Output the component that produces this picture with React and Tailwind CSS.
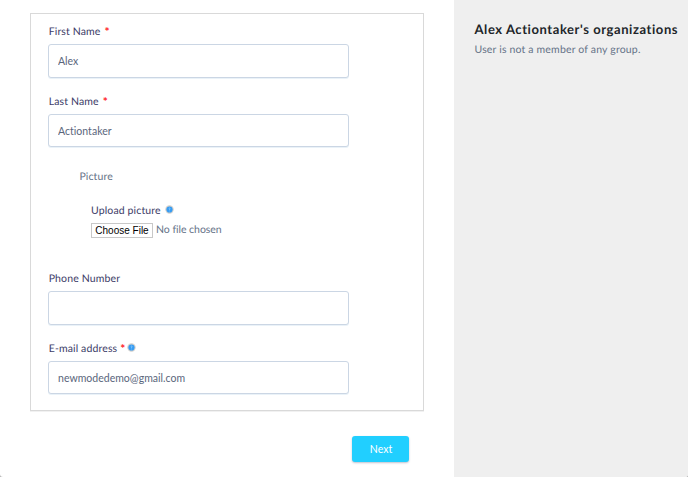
function HelpDot({ className = '' }) {
  return (
    <svg className={`h-[9px] w-[9px] shrink-0 ${className}`} viewBox="0 0 9 9">
      <circle cx="4.5" cy="4.5" r="4.2" fill="#d3d0cc" />
      <circle cx="4.5" cy="4.5" r="3.1" fill="#369cf3" />
      <path d="M3.8 3.4Q4.5 2.7 5.1 3.5Q5.1 4.1 4.5 4.6V5.1M4.5 5.7V6.3" fill="none" stroke="#a5daff" strokeWidth="0.7" />
    </svg>
  );
}

function Required({ className = '' }) {
  return <span className={`text-[12px] font-bold tracking-normal text-[#ff1f2d] ${className}`}>*</span>;
}

function Field({ label, required, help, value = '', tall, className = '' }) {
  return (
    <div className={className}>
      <label className="flex h-[14px] items-center whitespace-pre pl-[0.7px] pt-px leading-[14px] tracking-[0.13px] text-[#3d3d68]">
        <span>{label}</span>
        {required && <Required className={help ? 'ml-[3px]' : 'ml-[4px]'} />}
        {help && <HelpDot className="-mt-[2px] ml-[1.5px]" />}
      </label>
      <input
        type="text"
        defaultValue={value}
        className={`mt-[6px] block w-[301px] rounded-[3px] border border-[#cbd6e4] bg-white px-[9px] tracking-[0.02px] text-[#5a667c] shadow-[0_1px_0_#eaf2f8] outline-none ${tall ? 'h-[34px] pb-px' : 'h-[33px]'}`}
      />
    </div>
  );
}

export default function App() {
  return (
    <div className="bg-[#b5b5b5]">
      <div className="flex h-[477px] w-[688px] overflow-hidden rounded-b-[3px] bg-white font-['Lato','Liberation_Sans',sans-serif] text-[10.5px] text-[#667388] [text-rendering:geometricPrecision]">
        <main className="w-[454px] pl-[30px] pt-[13px]">
          <section className="h-[398px] w-[394px] border border-[#d9d9d9] pl-[17px] pt-[10px] shadow-[0_1px_0_#f1f1f1]">
            <Field label="First Name" required value="Alex" tall />
            <Field className="mt-[16px]" label="Last Name" required value="Actiontaker" />
            <fieldset className="mt-[22px] pl-[31px]">
              <div className="h-[14px] pt-px pl-[0.5px] leading-[14px] tracking-[0.1px]">Picture</div>
              <div className="mt-[20px] pl-[12px]">
                <div className="flex h-[14px] items-center pt-px leading-[14px] tracking-[0.13px] text-[#3d3d68]">
                  <span>Upload picture</span>
                  <HelpDot className="-mt-[2px] ml-[4.5px]" />
                </div>
                <div className="mt-[6px] flex h-[15px] items-center">
                  <button className="h-[15px] w-[62px] whitespace-nowrap border border-[#c8c8c8] bg-white font-['Liberation_Sans',sans-serif] text-[10px] leading-[13px] text-black">
                    Choose File
                  </button>
                  <span className="ml-[3px] pt-px tracking-[-0.04px]">No file chosen</span>
                </div>
              </div>
            </fieldset>
            <Field className="mt-[33px]" label="Phone Number" tall />
            <Field className="mt-[16px]" label="E-mail address" required help value="newmodedemo@gmail.com" />
          </section>
          <button className="ml-[322px] mt-[25px] block h-[26px] w-[57px] rounded-[3px] bg-[#21cfff] pl-px pt-px text-[10.5px] text-white shadow-[0_1px_2px_rgba(50,50,93,0.3)]">
            Next
          </button>
        </main>
        <aside className="flex-1 bg-[#efefef] pl-[20.5px] pt-[21px]">
          <h2 className="h-[16px] whitespace-nowrap text-[13px] font-bold leading-[16px] tracking-[0.57px] text-[#212529]">Alex Actiontaker's organizations</h2>
          <p className="mt-[5px] h-[14px] whitespace-nowrap pt-px leading-[14px] tracking-[0.17px]">User is not a member of any group.</p>
        </aside>
      </div>
    </div>
  );
}
